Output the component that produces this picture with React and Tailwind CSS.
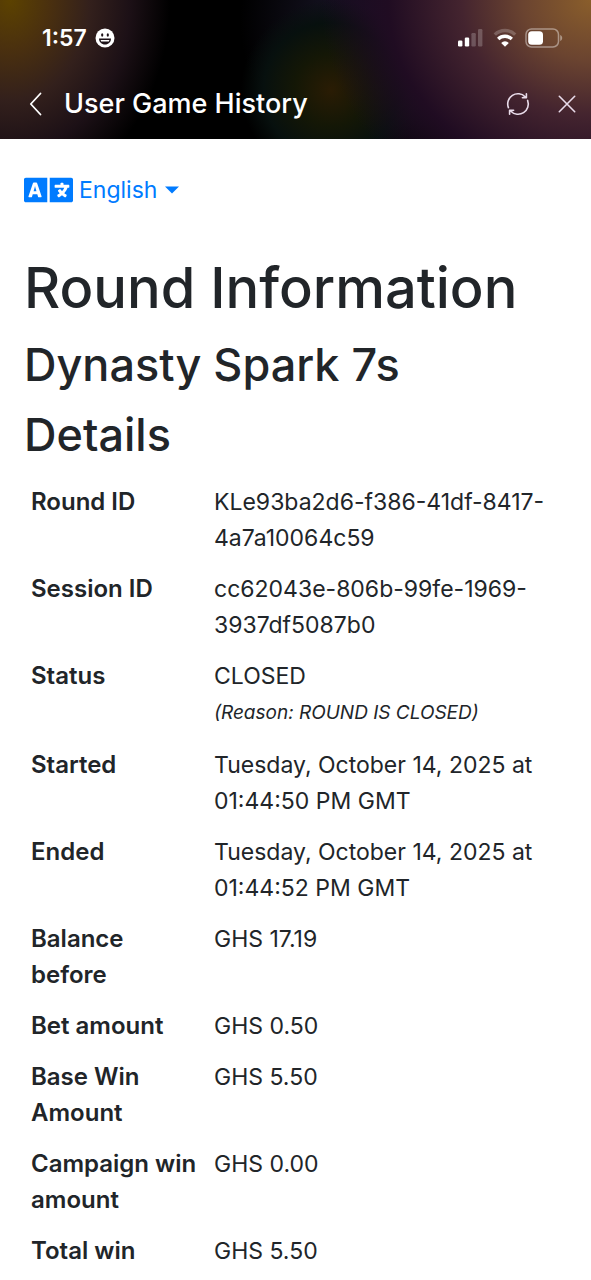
import React from "react";
import { FaLanguage } from "react-icons/fa";

const details = [
  { label: "Round ID", value: "KLe93ba2d6-f386-41df-8417-4a7a10064c59" },
  { label: "Session ID", value: "cc62043e-806b-99fe-1969-3937df5087b0" },
  { label: "Status", value: "CLOSED", note: "(Reason: ROUND IS CLOSED)" },
  { label: "Started", value: "Tuesday, October 14, 2025 at 01:44:50 PM GMT" },
  { label: "Ended", value: "Tuesday, October 14, 2025 at 01:44:52 PM GMT" },
  { label: "Balance before", value: "GHS 17.19" },
  { label: "Bet amount", value: "GHS 0.50" },
  { label: "Base Win Amount", value: "GHS 5.50" },
  { label: "Campaign win amount", value: "GHS 0.00" },
  { label: "Total win", value: "GHS 5.50" },
];

const StatusBar = () => (
  <div className="flex items-center justify-between pl-[42px] pr-7">
    <div className="flex items-center gap-2">
      <span className="text-[23px] leading-7 font-semibold">1:57</span>
      <svg className="w-5 h-5" viewBox="0 0 20 20" aria-hidden="true">
        <circle cx="10" cy="10" r="9.5" fill="#fff" />
        <ellipse cx="7.2" cy="7" rx="1.1" ry="1.7" fill="#1d1218" />
        <ellipse cx="12.8" cy="7" rx="1.1" ry="1.7" fill="#1d1218" />
        <path d="M4 10.5h12c0 3.6-2.6 6-6 6s-6-2.4-6-6z" fill="#1d1218" />
        <path d="M5.6 11.9h8.8l-.5 1.5H6.1z" fill="#fff" />
      </svg>
    </div>
    <div className="flex items-center gap-2">
      {/* Signal */}
      <svg className="w-7 h-5" viewBox="0 0 28 20" aria-hidden="true">
        <rect x="1" y="12.5" width="4.4" height="6" rx="1.2" fill="#fff" />
        <rect x="7.8" y="9.5" width="4.4" height="9" rx="1.2" fill="#fff" />
        <rect x="14.4" y="5" width="4.4" height="13.5" rx="1.2" fill="#fff" fillOpacity=".22" />
        <rect x="21" y="1" width="4.4" height="17.5" rx="1.2" fill="#fff" fillOpacity=".22" />
      </svg>
      {/* Wifi */}
      <svg className="w-6 h-5" viewBox="0 0 24 20" fill="none" aria-hidden="true">
        <path d="M1.8 6.6a14.6 14.6 0 0 1 20.4 0" stroke="#fff" strokeOpacity=".22" strokeWidth="3.4" />
        <path d="M5.2 11a9.8 9.8 0 0 1 13.6 0" stroke="#fff" strokeWidth="3.4" />
        <path d="M12 18.8l-3.8-3.9a5.3 5.3 0 0 1 7.6 0z" fill="#fff" />
      </svg>
      {/* Battery */}
      <svg className="w-[38px] h-5" viewBox="0 0 38 20" aria-hidden="true">
        <rect x="1" y="1" width="32.5" height="18" rx="5.5" fill="none" stroke="#fff" strokeOpacity=".42" strokeWidth="1.5" />
        <rect x="3.2" y="3.2" width="14.8" height="13.6" rx="3.6" fill="#fff" />
        <path d="M35.2 7v6c1.3-.5 2-1.6 2-3s-.7-2.5-2-3z" fill="#fff" fillOpacity=".42" />
      </svg>
    </div>
  </div>
);

const TopBar = () => (
  <div className="flex items-center pl-7 pr-[11px] text-white">
    <button type="button" aria-label="Back" className="py-1">
      <svg className="w-4 h-7" viewBox="0 0 16 28" fill="none" stroke="currentColor" strokeWidth="1.8" strokeLinecap="round" strokeLinejoin="round">
        <path d="M12.5 3.5L2.8 14l9.7 10.5" />
      </svg>
    </button>
    <h1 className="flex-1 ml-5 text-[27px] leading-9 font-medium">
      User Game History
    </h1>
    <button type="button" aria-label="Reload" className="p-1">
      <svg className="w-6 h-6" viewBox="0 0 24 24" fill="none" stroke="#e9dcea" strokeWidth="1.6" strokeLinecap="round" strokeLinejoin="round">
        <path d="M2.4 15.6A10.2 10.2 0 0 1 19.2 4.8" />
        <path d="M20.4 1.8v3.9h-4l4-.9z" />
        <path d="M21.6 8.4A10.2 10.2 0 0 1 4.8 19.2" />
        <path d="M3.6 22.2v-3.9h4l-4 .9z" />
      </svg>
    </button>
    <button type="button" aria-label="Close" className="p-1 ml-5">
      <svg className="w-[18px] h-5" viewBox="0 0 18 20" fill="none" stroke="#e9dcea" strokeWidth="1.6" strokeLinecap="round">
        <path d="M1.3 2.3l15.4 15.4M16.7 2.3L1.3 17.7" />
      </svg>
    </button>
  </div>
);

const LanguageSelect = () => (
  <div className="relative inline-flex items-center text-[#007bff]">
    <FaLanguage className="w-[49px] h-10" aria-hidden="true" />
    <select
      aria-label="Language"
      defaultValue="en"
      className="appearance-none [field-sizing:content] h-10 bg-transparent pl-[6px] pr-[22px] text-[23px] leading-9 outline-none"
    >
      <option value="en">English</option>
    </select>
    <svg className="absolute right-0 w-[14px] h-2 pointer-events-none" viewBox="0 0 14 8" aria-hidden="true">
      <path d="M0 .5h14L7 7.5z" fill="currentColor" />
    </svg>
  </div>
);

const App = () => {
  return (
    <div className="min-h-screen bg-white text-[#212529] font-['Inter','Liberation_Sans',sans-serif]">
      <header className="pt-6 pb-[17px] text-white bg-black bg-[radial-gradient(ellipse_160px_200px_at_10px_0px,#5c4200_0%,#4a300f_25%,#33201c_50%,#1c1016_75%,transparent_100%),radial-gradient(ellipse_270px_240px_at_100%_0px,#8a5e2b_0%,#6b4430_25%,#44242f_48%,#200c22_75%,transparent_100%),radial-gradient(circle_90px_at_56%_90px,#2a1c04_0%,#141706_40%,#07100e_75%,transparent_100%),radial-gradient(ellipse_150px_150px_at_66%_20px,#170d26_0%,#110f1b_50%,transparent_100%)]">
        <StatusBar />
        <div className="pt-[34px]">
          <TopBar />
        </div>
      </header>

      <main className="px-6 pt-[31px]">
        <LanguageSelect />

        <h2 className="mt-9 text-[56px] leading-[72px] font-medium">
          Round Information
        </h2>
        <h3 className="mt-3 text-[45px] leading-[58px] font-medium">
          Dynasty Spark 7s
        </h3>
        <h3 className="mt-3 text-[45px] leading-[58px] font-medium">Details</h3>

        <table className="mt-3 w-full text-left">
          <tbody>
            {details.map((item) => (
              <tr key={item.label} className="align-top">
                <th scope="row" className="w-[183px] px-[7px] pt-2 pb-[7px] text-2xl leading-9 font-semibold">
                  {item.label}
                </th>
                <td className="px-[7px] pt-2 pb-[7px] text-[23px] leading-9">
                  {item.value}
                  {item.note && (
                    <em className="block text-[19px] leading-[38px]">{item.note}</em>
                  )}
                </td>
              </tr>
            ))}
          </tbody>
        </table>
      </main>
    </div>
  );
};

export default App;
